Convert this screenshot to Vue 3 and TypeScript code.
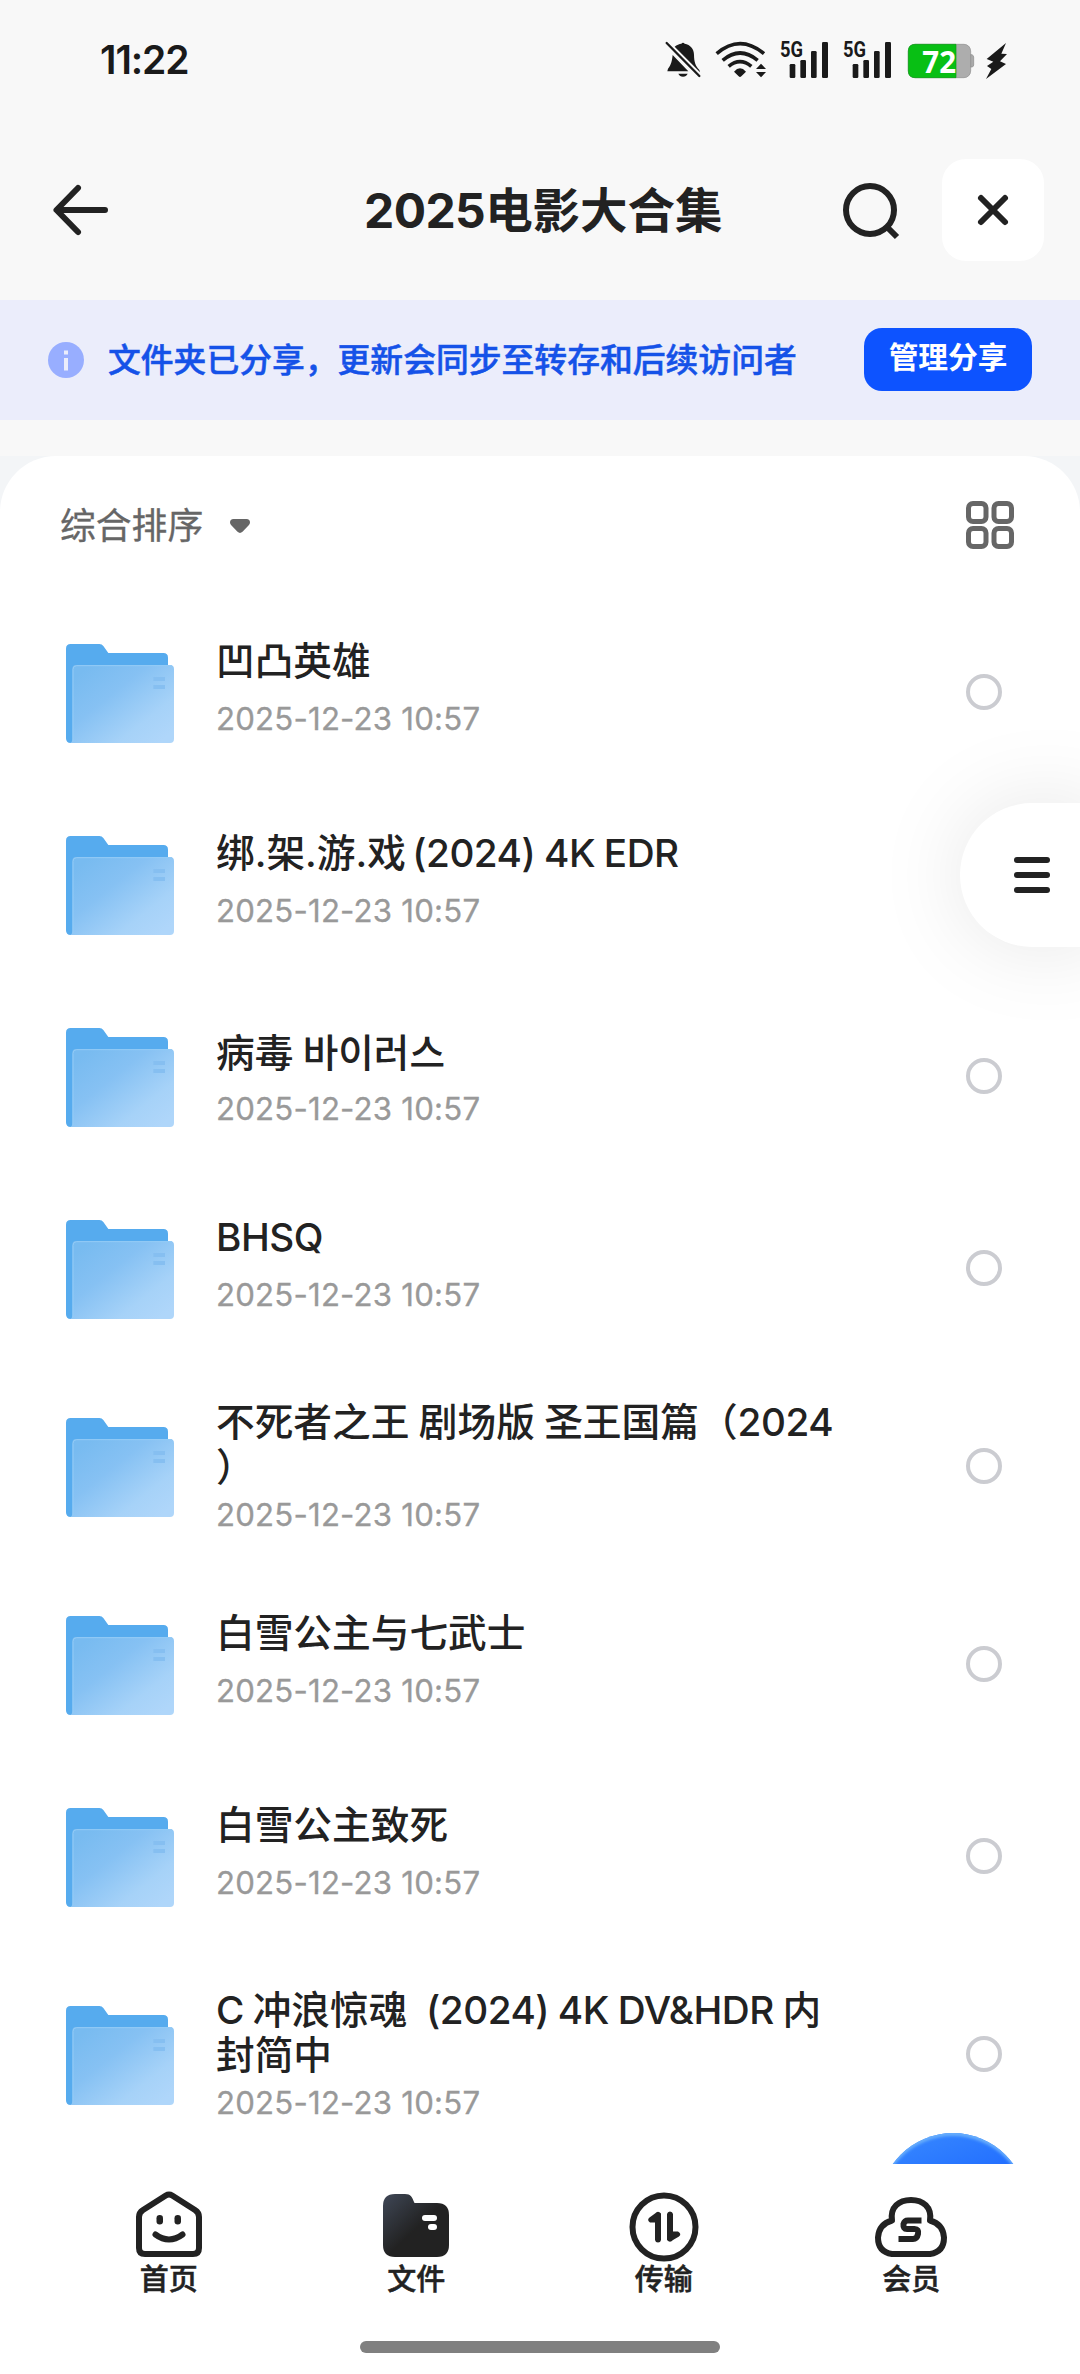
<script setup lang="ts">
interface TitlePart {
  text: string
  latin?: boolean
  tight?: boolean
}
interface Folder {
  id: number
  lines: TitlePart[][]
  date: string
  korean?: boolean
  covered?: boolean
}

const date = '2025-12-23 10:57'

const folders: Folder[] = [
  { id: 1, date, lines: [[{ text: '凹凸英雄' }]] },
  {
    id: 2,
    date,
    covered: true,
    lines: [[{ text: '绑.架.游.戏' }, { text: ' ', tight: true }, { text: '(2024) 4K EDR', latin: true }]],
  },
  { id: 3, date, korean: true, lines: [[{ text: '病毒 바이러스' }]] },
  { id: 4, date, lines: [[{ text: 'BHSQ', latin: true }]] },
  {
    id: 5,
    date,
    lines: [[{ text: '不死者之王 剧场版 圣王国篇（' }, { text: '2024', latin: true }], [{ text: '）' }]],
  },
  { id: 6, date, lines: [[{ text: '白雪公主与七武士' }]] },
  { id: 7, date, lines: [[{ text: '白雪公主致死' }]] },
  {
    id: 8,
    date,
    lines: [
      [
        { text: 'C ', latin: true },
        { text: '冲浪惊魂\u00a0\u00a0' },
        { text: '(2024) 4K DV&HDR ', latin: true },
        { text: '内' },
      ],
      [{ text: '封简中' }],
    ],
  },
]
</script>

<template>
  <div class="screen">
    <div class="status">
      <span class="clock">11:22</span>
      <svg class="status-icons" viewBox="72 30 1035 153">
        <g fill="#1a1a1a">
          <path d="M98 105C96 122 94 134 84 146L82 154H145Z" />
          <path d="M104 80C110 74 118 72 124 71Q129 65 134 71C151 74 162 87 162 104C162 126 167 138 178 150L180 157Z" />
          <path d="M115 161H143Q139 170 129 170Q119 170 115 161Z" />
        </g>
        <path d="M80 69L178 168" stroke="#1a1a1a" stroke-width="7" stroke-linecap="round" />
        <g fill="none" stroke="#1a1a1a" stroke-width="11">
          <path d="M230 101Q300 41 372 101" />
          <path d="M248 121Q300 77 353 121" />
          <path d="M266 139Q300 111 334 139" />
        </g>
        <path d="M282 155Q300 135 318 155L304 169Q300 173 296 169Z" fill="#1a1a1a" />
        <path d="M348 147L363 131L378 147ZM348 156L363 172L378 156Z" fill="#1a1a1a" />
        <g v-for="x in [0, 189]" :key="x" :transform="`translate(${x} 0)`" fill="#1a1a1a">
          <text x="420" y="111" class="net" textLength="69" lengthAdjust="spacingAndGlyphs">5G</text>
          <rect x="449" y="132" width="17" height="42" rx="4" />
          <rect x="481" y="120" width="17" height="54" rx="4" />
          <rect x="513" y="93" width="17" height="81" rx="4" />
          <rect x="546" y="66" width="18" height="108" rx="4" />
        </g>
        <path d="M988 104H996Q1001 106 1001 112V135Q1001 140 996 141H988Z" fill="#aaa" stroke="#888" stroke-width="2" />
        <rect x="805" y="73" width="187" height="100" rx="20" fill="#adadad" stroke="#8d8d8d" stroke-width="2" />
        <path d="M948 73H825Q805 73 805 93V153Q805 173 825 173H948Z" fill="#08bf14" stroke="#0a9a14" stroke-width="2" />
        <text x="847" y="158" class="level" textLength="101" lengthAdjust="spacingAndGlyphs">72</text>
        <path d="M1098 69L1040 117L1060 125L1041 138L1054 147L1038 177L1098 132L1080 124L1101 102L1084 101Z" fill="#1a1a1a" />
      </svg>
    </div>

    <header class="topbar">
      <svg class="back" viewBox="0 0 60 54">
        <path d="M27 5L5.500 27L27 49M6 27H54" fill="none" stroke="#222" stroke-width="6" stroke-linecap="round" stroke-linejoin="round" />
      </svg>
      <h1 class="heading"><span class="heading-num">2025</span>电影大合集</h1>
      <svg class="search" viewBox="0 0 60 60">
        <circle cx="29" cy="29" r="24" fill="none" stroke="#222" stroke-width="6" />
        <path d="M46 46L56 56" stroke="#222" stroke-width="6" />
      </svg>
      <button class="close">
        <svg viewBox="0 0 36 36">
          <path d="M6 6L30 30M30 6L6 30" stroke="#222" stroke-width="6" stroke-linecap="round" />
        </svg>
      </button>
    </header>

    <section class="banner">
      <svg class="info" viewBox="0 0 36 36">
        <circle cx="18" cy="18" r="18" fill="#98aeff" />
        <path d="M16 8.500H20V12.500H16ZM16 16H20V28.500H16Z" fill="#ebedfb" />
      </svg>
      <p class="banner-text">文件夹已分享，更新会同步至转存和后续访问者</p>
      <button class="manage">管理分享</button>
    </section>

    <main class="sheet-wrap">
      <div class="sheet">
        <div class="toolbar">
          <span class="sort">综合排序</span>
          <svg class="caret" viewBox="0 0 20 14">
            <path d="M3.500 0H16.500Q20 0 20 3.500Q20 5 18.500 6.500L12.500 12.800Q10 15 7.500 12.800L1.500 6.500Q0 5 0 3.500Q0 0 3.500 0Z" fill="#666" />
          </svg>
          <svg class="grid" viewBox="0 0 48 48">
            <g fill="none" stroke="#666" stroke-width="5">
              <rect x="2.500" y="2.500" width="17.500" height="18" rx="4.500" />
              <rect x="28" y="2.500" width="17.500" height="18" rx="4.500" />
              <rect x="2.500" y="27.500" width="17.500" height="18" rx="4.500" />
              <rect x="28" y="27.500" width="17.500" height="18" rx="4.500" />
            </g>
          </svg>
        </div>

        <ul class="list">
          <li v-for="f in folders" :key="f.id" class="row" :class="{ tall: f.lines.length > 1, korean: f.korean }">
            <svg class="folder" viewBox="78 132 324 297">
              <defs>
                <linearGradient :id="`front${f.id}`" x1="0.1" y1="0.1" x2="0.95" y2="0.9">
                  <stop offset="0" stop-color="#78bbf0" />
                  <stop offset="0.35" stop-color="#86c1f3" />
                  <stop offset="0.75" stop-color="#a6d2f8" />
                  <stop offset="1" stop-color="#afd6fa" />
                </linearGradient>
              </defs>
              <path d="M92 132H178Q186 132 190 138L205 159H370Q384 159 384 173V240H110V429H92Q78 429 78 415V146Q78 132 92 132Z" fill="#56abee" />
              <path d="M108 195H390Q402 195 402 207V417Q402 429 390 429H90Q97 427 97 417V207Q97 195 108 195Z" :fill="`url(#front${f.id})`" />
              <path d="M99 424V208Q99 197 110 197H396" fill="none" stroke="#93cbf6" stroke-width="3" />
              <path d="M340 231H375V243H340ZM340 255H375V267H340Z" fill="#86bff1" />
            </svg>
            <div class="meta">
              <div class="name">
                <div v-for="(line, i) in f.lines" :key="i" class="line">
                  <span v-for="(p, j) in line" :key="j" :class="{ latin: p.latin, tight: p.tight }">{{ p.text }}</span>
                </div>
              </div>
              <time class="date">{{ f.date }}</time>
            </div>
            <span v-if="!f.covered" class="check"></span>
          </li>
        </ul>
      </div>
    </main>

    <nav class="tabs">
      <a class="tab">
        <svg viewBox="0 0 72 72">
          <g fill="none" stroke="#222" stroke-width="6" stroke-linecap="round" stroke-linejoin="round">
            <path d="M32.800 5.500Q36 3.500 39.200 5.500L62 20Q66 22.500 66 27V58Q66 64 60 64H12Q6 64 6 58V27Q6 22.500 10 20Z" />
            <path d="M22.500 44.500Q36 54.500 49.500 44.500" />
          </g>
          <rect x="23.500" y="25" width="6.500" height="9.500" rx="3.200" fill="#222" />
          <rect x="41.500" y="25" width="6.500" height="9.500" rx="3.200" fill="#222" />
        </svg>
        <span>首页</span>
      </a>
      <a class="tab">
        <svg viewBox="0 0 72 72">
          <defs>
            <linearGradient id="tabFolder" x1="0.05" y1="0.1" x2="0.5" y2="0.55">
              <stop offset="0" stop-color="#3b424f" />
              <stop offset="1" stop-color="#222" />
            </linearGradient>
          </defs>
          <path d="M15 4H25C31 4 32 7 34.500 13H57Q69 13 69 25V55Q69 67 57 67H15Q3 67 3 55V16Q3 4 15 4Z" fill="url(#tabFolder)" />
          <rect x="42" y="25" width="15" height="6" rx="3" fill="#fff" />
          <rect x="48" y="34" width="9" height="6" rx="3" fill="#fff" />
        </svg>
        <span>文件</span>
      </a>
      <a class="tab">
        <svg viewBox="0 0 72 72">
          <circle cx="36" cy="37" r="31.500" fill="none" stroke="#222" stroke-width="6" />
          <path d="M27 23.500Q30 20 33 23.500V50Q32.500 52.500 30 52.500Q27.500 52.500 27 50V32.500H22Q18.500 30 21.500 27.500Z" fill="#222" />
          <path d="M45 50Q42 53.500 39 50V24Q39.500 21.500 42 21.500Q44.500 21.500 45 24V41.500H50Q54 44 51 46.500Z" fill="#222" />
        </svg>
        <span>传输</span>
      </a>
      <a class="tab">
        <svg viewBox="0 0 72 72">
          <path d="M17 64Q3 62 3 47.500Q4 34 17 30.500C15 17 24 10 36 10C48 10 57 17 55 30.500Q68 34 69 47.500Q69 62 55 64Z" fill="none" stroke="#222" stroke-width="6" stroke-linejoin="round" />
          <path d="M46.500 30.500H33Q29.500 30.500 28.500 34Q28 39 32 39H39.500Q44 39 43 44Q42 49 38 49H23.500" fill="none" stroke="#222" stroke-width="6" stroke-linejoin="round" />
        </svg>
        <span>会员</span>
      </a>
    </nav>
    <div class="home-area"><span class="home-bar"></span></div>

    <div class="fab-clip"><span class="fab"></span></div>
    <button class="side-menu"><i></i><i></i><i></i></button>
  </div>
</template>

<style>
body {
  margin: 0;
}
</style>

<style scoped>
.screen {
  position: relative;
  width: 1080px;
  height: 2374px;
  overflow: hidden;
  display: flex;
  flex-direction: column;
  background: #f8f8f8;
  color: #222;
  font-family: Inter, 'Noto Sans CJK SC', sans-serif;
}
button {
  border: 0;
  padding: 0;
  font: inherit;
}
.status {
  height: 120px;
  box-sizing: border-box;
  padding: 0 71px 0 100px;
  display: flex;
  justify-content: space-between;
  align-items: center;
}
.clock {
  font-size: 39px;
  font-weight: 600;
  letter-spacing: -1.100px;
  color: #1a1a1a;
  padding-bottom: 2px;
}
.status-icons {
  width: 345px;
  height: 51px;
  margin-bottom: 9px;
}
.net {
  font: 700 66px Roboto, sans-serif;
}
.level {
  font: 700 91px 'Noto Sans', sans-serif;
  fill: #fff;
}
.topbar {
  height: 180px;
  display: flex;
  align-items: center;
  padding: 0 36px 0 51px;
}
.back {
  width: 60px;
  height: 54px;
}
.heading {
  margin: 2px 0 0 253px;
  width: 477px;
  font-size: 47.500px;
  line-height: 60px;
  font-weight: 700;
  white-space: nowrap;
}
.heading-num {
  font-size: 48px;
  letter-spacing: -0.600px;
}
.search {
  width: 60px;
  height: 60px;
  margin-top: 2px;
}
.close {
  width: 102px;
  height: 102px;
  margin-left: 41px;
  border-radius: 24px;
  background: #fff;
  display: grid;
  place-items: center;
}
.close svg {
  width: 36px;
  height: 36px;
}
.banner {
  height: 120px;
  box-sizing: border-box;
  padding: 0 48px;
  display: flex;
  align-items: center;
  background: #ebedfb;
}
.info {
  width: 36px;
  height: 36px;
}
.banner-text {
  margin: 0 0 6px 24px;
  flex: 1;
  font-size: 32.800px;
  font-weight: 500;
  color: #1552e8;
  white-space: nowrap;
  -webkit-text-stroke: 0.500px #1552e8;
}
.manage {
  width: 168px;
  height: 63px;
  border-radius: 18px;
  background: #0d53ff;
  color: #fff;
  font-size: 29.700px;
  font-weight: 600;
  padding-bottom: 9px;
  margin-bottom: 1px;
}
.sheet-wrap {
  height: 1708px;
  margin-top: 36px;
  background: #f3f5f7;
  overflow: hidden;
}
.sheet {
  height: 1708px;
  background: #fff;
  border-radius: 56px 56px 0 0;
}
.toolbar {
  height: 140px;
  box-sizing: border-box;
  padding: 0 66px 0 60px;
  display: flex;
  align-items: center;
}
.sort {
  font-size: 35.800px;
  color: #666;
  padding-bottom: 6px;
  -webkit-text-stroke: 0.300px #666;
}
.caret {
  width: 20px;
  height: 14px;
  margin-left: 27px;
}
.grid {
  width: 48px;
  height: 48px;
  margin-left: auto;
  margin-bottom: 2px;
}
.list {
  margin: 0;
  padding: 0;
  list-style: none;
}
.row {
  height: 192px;
  box-sizing: border-box;
  padding: 0 78px 0 66px;
  display: flex;
  align-items: center;
}
.row.tall {
  height: 204px;
}
.folder {
  width: 108px;
  height: 99px;
  margin-top: 3px;
}
.meta {
  align-self: stretch;
  flex: 1;
  margin-left: 42px;
  padding-top: 43px;
}
.tall .meta {
  padding-top: 36px;
}
.korean .meta {
  padding-top: 51px;
}
.line {
  font-size: 38.700px;
  line-height: 45px;
  height: 45px;
  font-weight: 500;
  white-space: pre;
  word-spacing: -1px;
}
.latin {
  letter-spacing: -0.500px;
}
.tight {
  letter-spacing: -3px;
}
.date {
  display: block;
  margin-top: 17px;
  font-size: 31.200px;
  letter-spacing: 0.200px;
  line-height: 36px;
  color: #999;
  white-space: nowrap;
  -webkit-text-stroke: 0.300px #999;
}
.korean .date {
  margin-top: 15px;
}
.tall .date {
  margin-top: 7px;
}
.check {
  width: 36px;
  height: 36px;
  box-sizing: border-box;
  border: 4px solid #cbccd1;
  border-radius: 50%;
}
.tabs {
  height: 140px;
  padding: 0 45px;
  display: flex;
  background: #fff;
}
.tab {
  flex: 1;
  display: flex;
  flex-direction: column;
  align-items: center;
  padding-top: 26px;
}
.tab svg {
  width: 72px;
  height: 72px;
}
.tab span {
  font-size: 29px;
  line-height: 36px;
  font-weight: 500;
  -webkit-text-stroke: 0.500px #222;
}
.home-area {
  flex: 1;
  background: #fff;
  display: flex;
  justify-content: center;
  align-items: flex-start;
  padding-top: 37px;
}
.home-bar {
  width: 360px;
  height: 12px;
  border-radius: 6px;
  background: #808080;
}
.fab-clip {
  position: absolute;
  left: 870px;
  top: 2120px;
  width: 166px;
  height: 44px;
  overflow: hidden;
  display: flex;
  justify-content: center;
}
.fab {
  flex: none;
  width: 148px;
  height: 148px;
  margin-top: 13px;
  box-sizing: border-box;
  border-radius: 50%;
  background: linear-gradient(160deg, #3a8bff, #1f6bff 45%);
  box-shadow: inset 0 3px 3px #68aefc;
}
.side-menu {
  position: absolute;
  left: 960px;
  top: 803px;
  width: 144px;
  height: 144px;
  box-sizing: border-box;
  border-radius: 72px 0 0 72px;
  background: #fff;
  box-shadow: 0 0 90px rgba(0, 0, 0, 0.1);
  padding-left: 54px;
  display: flex;
  flex-direction: column;
  justify-content: center;
  gap: 9px;
}
.side-menu i {
  width: 36px;
  height: 6px;
  border-radius: 3px;
  background: #222;
}
</style>
